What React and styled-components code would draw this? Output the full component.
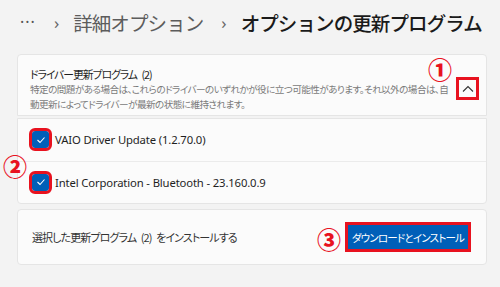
import React from "react";
import styled, { createGlobalStyle } from "styled-components";

const Global = createGlobalStyle`
  body {
    margin: 0;
    background: #f3f3f3;
    font-family: "Noto Sans", "Noto Sans CJK JP", sans-serif;
  }
`;

const drivers = [
  { id: 1, name: "VAIO Driver Update (1.2.70.0)" },
  { id: 2, name: "Intel Corporation - Bluetooth - 23.160.0.9" },
];

const App = () => {
  return (
    <Page>
      <Global />
      <Breadcrumb>
        <Dots>···</Dots>
        <Sep>›</Sep>
        <Crumb>詳細オプション</Crumb>
        <Sep>›</Sep>
        <Crumb current>オプションの更新プログラム</Crumb>
      </Breadcrumb>

      <Expander>
        <Header>
          <HeaderText>
            <Title>ドライバー更新プログラム (2)</Title>
            <Desc>
              特定の問題がある場合は、これらのドライバーのいずれかが役に立つ可能性があります。それ以外の場合は、自動更新によってドライバーが最新の状態に維持されます。
            </Desc>
          </HeaderText>
          <ChevronBox>
            <Mark style={{ top: -23, left: -31 }}>①</Mark>
            <svg width="12" height="8" viewBox="0 0 12 8">
              <path d="M1 6.5 L6 1.5 L11 6.5" fill="none" stroke="#333" strokeWidth="1.1" />
            </svg>
          </ChevronBox>
        </Header>
        <Items>
          <Mark style={{ top: 35, left: -15 }}>②</Mark>
          {drivers.map((d) => (
            <Item key={d.id}>
              <Check>
                <svg width="10" height="8" viewBox="0 0 10 8">
                  <path d="M1.5 4 L4 6.5 L8.5 1.5" fill="none" stroke="#fff" strokeWidth="1.1" />
                </svg>
              </Check>
              <ItemName>{d.name}</ItemName>
            </Item>
          ))}
        </Items>
      </Expander>

      <InstallCard>
        <InstallText>選択した更新プログラム (2) をインストールする</InstallText>
        <ButtonWrap>
          <Mark style={{ top: 5, left: -28 }}>③</Mark>
          <Button>ダウンロードとインストール</Button>
        </ButtonWrap>
      </InstallCard>
    </Page>
  );
};
export default App;

const Page = styled.div`
  width: 500px;
  height: 287px;
  padding: 0 13px 0 17px;
  box-sizing: border-box;
  overflow: hidden;
`;

const Breadcrumb = styled.div`
  height: 54px;
  display: flex;
  align-items: center;
  padding-left: 3px;
  padding-bottom: 10px;
  box-sizing: border-box;
`;

const Dots = styled.span`
  font-size: 16px;
  color: #555;
  letter-spacing: 1px;
`;

const Sep = styled.span`
  font-size: 17px;
  color: #666;
  margin: 0 14px 0 18px;
`;

const Crumb = styled.span`
  font-family: "Noto Sans CJK JP", sans-serif;
  font-size: 19.5px;
  letter-spacing: -0.9px;
  color: ${(p) => (p.current ? "#1a1a1a" : "#5c5c5c")};
  font-weight: ${(p) => (p.current ? 500 : 400)};
`;

const Expander = styled.div`
  display: flex;
  flex-direction: column;
  gap: 2px;
`;

const Header = styled.div`
  height: 62px;
  background: #fbfbfb;
  border: 1px solid #e5e5e5;
  border-radius: 4px 4px 0 0;
  box-sizing: border-box;
  display: flex;
  align-items: flex-start;
  padding: 12px 7px 0 12px;
  gap: 6px;
`;

const HeaderText = styled.div`
  flex: 1;
  font-family: "Noto Sans CJK JP", sans-serif;
  font-feature-settings: "palt";
`;

const Title = styled.div`
  font-size: 10.8px;
  color: #1f1f1f;
  line-height: 15px;
  letter-spacing: -1px;
  word-spacing: 3px;
`;

const Desc = styled.div`
  font-size: 9.6px;
  color: #7a7a7a;
  line-height: 15px;
  letter-spacing: -0.56px;
`;

const ChevronBox = styled.div`
  position: relative;
  flex-shrink: 0;
  width: 23px;
  height: 23px;
  border: 3px solid #e8121f;
  box-sizing: border-box;
  display: flex;
  align-items: center;
  justify-content: center;
  margin-top: 10px;
`;

const Mark = styled.span`
  position: absolute;
  font-family: "Noto Sans CJK JP", sans-serif;
  font-size: 24px;
  font-weight: 900;
  color: #e8121f;
  line-height: 24px;
`;

const Items = styled.div`
  position: relative;
  background: #fbfbfb;
  border: 1px solid #e5e5e5;
  border-radius: 0 0 4px 4px;
  box-sizing: border-box;
  height: 86px;
  display: flex;
  flex-direction: column;
`;

const Item = styled.div`
  flex: 1;
  display: flex;
  align-items: center;
  padding-left: 14px;
  gap: 3px;
  & + & {
    border-top: 1px solid #ebebeb;
  }
`;

const Check = styled.div`
  width: 17px;
  height: 17px;
  background: #005fb8;
  border-radius: 3px;
  outline: 3px solid #e8121f;
  display: flex;
  align-items: center;
  justify-content: center;
  margin-right: 3px;
`;

const ItemName = styled.span`
  font-size: 11.3px;
  color: #1f1f1f;
  letter-spacing: -0.15px;
`;

const InstallCard = styled.div`
  margin-top: 5px;
  height: 56px;
  background: #fbfbfb;
  border: 1px solid #e5e5e5;
  border-radius: 4px;
  box-sizing: border-box;
  display: flex;
  align-items: center;
  justify-content: space-between;
  padding: 0 15px 0 14px;
`;

const InstallText = styled.span`
  font-family: "Noto Sans CJK JP", sans-serif;
  font-feature-settings: "palt";
  font-size: 11px;
  color: #333;
  letter-spacing: -0.9px;
  word-spacing: 3px;
`;

const ButtonWrap = styled.div`
  position: relative;
  display: flex;
`;

const Button = styled.button`
  width: 126px;
  height: 30px;
  background: #005fb8;
  border: 3px solid #e8121f;
  box-sizing: border-box;
  color: #fff;
  font-family: "Noto Sans CJK JP", sans-serif;
  font-feature-settings: "palt";
  font-size: 10.5px;
  letter-spacing: -0.8px;
  white-space: nowrap;
  padding: 0;
`;
